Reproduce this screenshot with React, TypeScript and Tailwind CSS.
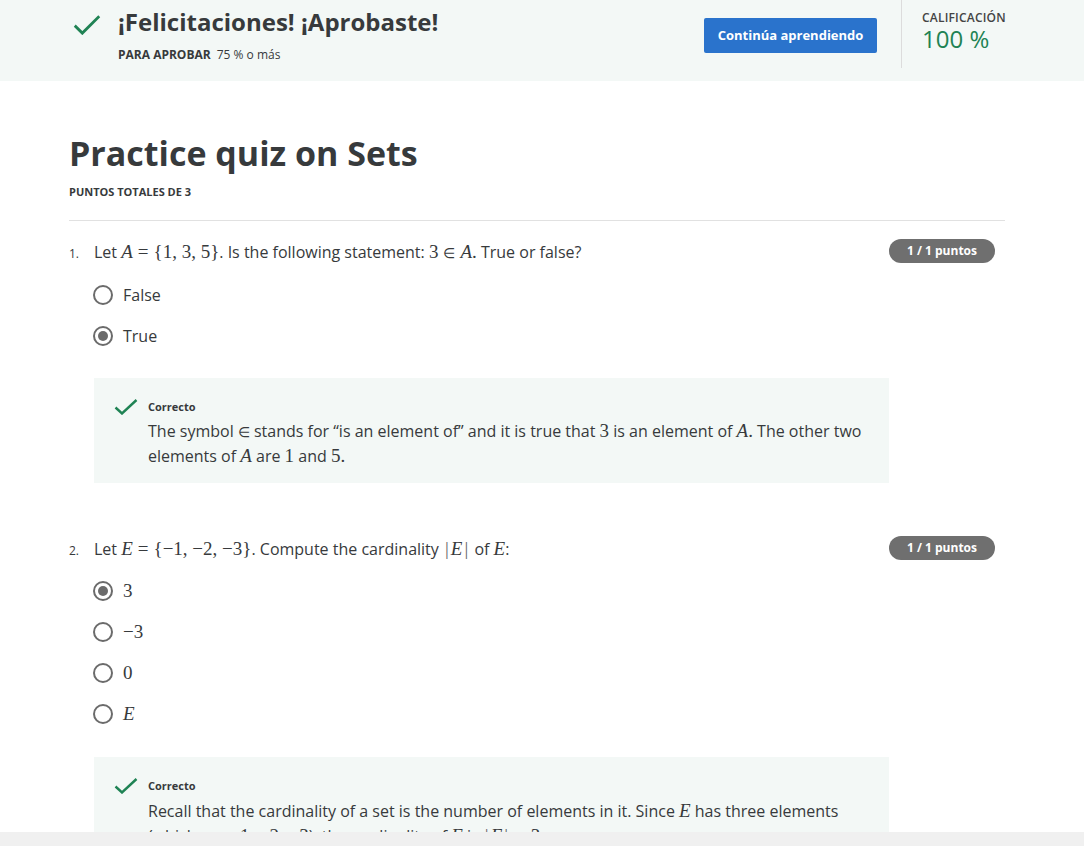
import React from 'react';

const sans = { fontFamily: '"Open Sans", "Noto Sans", sans-serif' };

function Check({ className }: { className?: string }) {
    return (
        <svg viewBox="0 0 24 16" className={className} fill="none" preserveAspectRatio="none">
            <path d="M1.5 8.5 L8 14.5 L22.5 1" stroke="#1f8354" strokeWidth="2.4" />
        </svg>
    );
}

// KaTeX-ish inline math pieces
function M({ children }: { children: React.ReactNode }) {
    return <span className="font-['Liberation_Serif',serif] text-[19px] leading-[1]">{children}</span>;
}
function V({ children }: { children: React.ReactNode }) {
    return <span className="font-['Liberation_Serif',serif] text-[19px] leading-[1] italic">{children}</span>;
}
function Rel({ children }: { children: React.ReactNode }) {
    return <span className="mx-[5px] font-['Liberation_Serif',serif] text-[19px] leading-[1]">{children}</span>;
}
function In({ spaced }: { spaced?: boolean }) {
    return <span className={spaced ? 'mx-[5px] text-[14px] leading-[1]' : 'text-[14px] leading-[1]'}>∈</span>;
}
function Bar() {
    return <span className="mx-[2px] font-['Liberation_Serif',serif] text-[19px] leading-[1] text-[#666]">|</span>;
}

function Radio({ checked }: { checked?: boolean }) {
    return (
        <span className="flex h-5 w-5 shrink-0 items-center justify-center rounded-full border-2 border-[#6b6b6b] bg-white">
            {checked && <span className="h-[10px] w-[10px] rounded-full bg-[#6b6b6b]" />}
        </span>
    );
}

function Option({ checked, children }: { checked?: boolean; children: React.ReactNode }) {
    return (
        <div className="flex h-5 items-center gap-[10px]">
            <Radio checked={checked} />
            <span className="text-[16px] text-[#373a3c]">{children}</span>
        </div>
    );
}

function Badge() {
    return (
        <span className="flex h-6 w-[106px] shrink-0 items-center justify-center rounded-full bg-[#6f6f6f] text-[12px] font-bold text-white">
            1 / 1 puntos
        </span>
    );
}

function Feedback({ children }: { children: React.ReactNode }) {
    return (
        <div className="ml-[25px] w-[795px] bg-[#f3f8f6] pb-[14px] pl-5 pr-3 pt-5">
            <div className="flex gap-[10px]">
                <Check className="mt-[1px] h-4 w-6 shrink-0" />
                <div>
                    <div className="pt-[1px] text-[11px] font-bold text-[#373a3c]">Correcto</div>
                    <p className="mt-[4px] text-[16px] leading-[25px] text-[#373a3c]">{children}</p>
                </div>
            </div>
        </div>
    );
}

export default function App() {
    return (
        <div style={sans} className="flex h-[846px] flex-col overflow-hidden bg-white text-[#373a3c]">
            <div className="min-h-0 flex-1 overflow-hidden">
                {/* banner */}
                <div className="flex h-[81px] bg-[#f3f8f6]">
                    <div className="flex w-[901px] pl-[73px] pt-[6px]">
                        <Check className="mt-[9px] h-[20px] w-[28px] shrink-0" />
                        <div className="ml-[17px]">
                            <div className="text-[24px] font-bold leading-[32px] text-[#373a3c]">
                                ¡Felicitaciones! ¡Aprobaste!
                            </div>
                            <div className="mt-[8px] text-[12px]">
                                <span className="font-bold">PARA APROBAR</span>
                                <span className="ml-[6px]">75 % o más</span>
                            </div>
                        </div>
                        <div className="ml-auto mr-6 pt-[12px]">
                            <button className="h-[35px] w-[173px] rounded-[2px] bg-[#2a73cc] text-[13px] font-bold text-white">
                                Continúa aprendiendo
                            </button>
                        </div>
                    </div>
                    <div className="h-[68px] w-px bg-[#dcdcdc]" />
                    <div className="pl-5 pt-[9px]">
                        <div className="text-[12px] font-semibold tracking-[0.2px] text-[#444]">CALIFICACIÓN</div>
                        <div className="-mt-[2px] text-[24px] leading-[28px] text-[#1f8354]">100 %</div>
                    </div>
                </div>

                <div className="box-content w-[936px] pl-[69px]">
                    <h1 className="mt-[48px] text-[34px] font-bold leading-[48px] text-[#373a3c]">Practice quiz on Sets</h1>
                    <div className="mt-[7px] text-[11px] font-bold">PUNTOS TOTALES DE 3</div>
                    <div className="mt-[19px] h-px bg-[#e1e1e1]" />

                    {/* question 1 */}
                    <div className="mt-[18px] flex items-start justify-between pr-[10px]">
                        <div className="flex items-baseline pt-[1px]">
                            <span className="w-[25px] text-[12px]">1.</span>
                            <span className="text-[16px]">
                                Let <V>A</V><Rel>=</Rel><M>{'{'}1, 3, 5{'}'}</M>. Is the following statement: <M>3</M><In spaced /><V>A</V><M>.</M> True or false?
                            </span>
                        </div>
                        <Badge />
                    </div>
                    <div className="ml-6 mt-[21px] flex flex-col gap-[21px]">
                        <Option>False</Option>
                        <Option checked>True</Option>
                    </div>
                    <div className="mt-[32px]">
                        <Feedback>
                            The symbol <In /> stands for “is an element of” and it is true that <M>3</M> is an element of <V>A</V><M>.</M> The other two elements of <V>A</V> are <M>1</M> and <M>5</M><M>.</M>
                        </Feedback>
                    </div>

                    {/* question 2 */}
                    <div className="mt-[53px] flex items-start justify-between pr-[10px]">
                        <div className="flex items-baseline pt-[1px]">
                            <span className="w-[25px] text-[12px]">2.</span>
                            <span className="text-[16px]">
                                Let <V>E</V><Rel>=</Rel><M>{'{'}−1, −2, −3{'}'}</M>. Compute the cardinality <Bar /><V>E</V><Bar /> of <V>E</V>:
                            </span>
                        </div>
                        <Badge />
                    </div>
                    <div className="ml-6 mt-[20px] flex flex-col gap-[21px]">
                        <Option checked><M>3</M></Option>
                        <Option><M>−3</M></Option>
                        <Option><M>0</M></Option>
                        <Option><V>E</V></Option>
                    </div>
                    <div className="mt-[33px]">
                        <Feedback>
                            Recall that the cardinality of a set is the number of elements in it. Since <V>E</V> has three elements (which are <M>−1, −2, −3</M>), the cardinality of <V>E</V> is <Bar /><V>E</V><Bar /><Rel>=</Rel><M>3</M><M>.</M>
                        </Feedback>
                    </div>
                </div>
            </div>
            <div className="h-[14px] shrink-0 bg-[#f0f0f0]" />
        </div>
    );
}
